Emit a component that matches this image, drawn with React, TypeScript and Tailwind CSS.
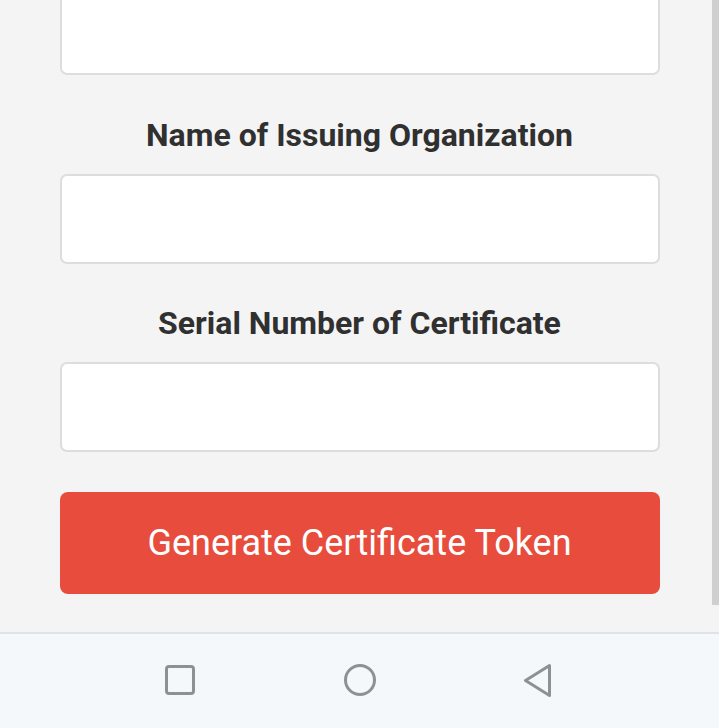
import React from 'react';

function Field({ label, spacing }: { label: string; spacing: string }) {
  return (
    <div className="flex flex-col items-center">
      <label className={`${spacing} text-[32px] leading-[34px] font-bold text-[#303030]`}>{label}</label>
      <input className="w-full h-[90px] bg-white border-2 border-[#dddddd] rounded-[7px] outline-none" />
    </div>
  );
}

export default function App() {
  return (
    <div className="w-[719px] h-[728px] flex flex-col bg-[#f4f4f4] overflow-hidden" style={{ fontFamily: 'Roboto, "Liberation Sans", sans-serif' }}>
      <div className="relative h-[632px] overflow-hidden">
        <div className="w-[600px] mx-auto flex flex-col">
          <input className="w-full h-[90px] mt-[-15px] bg-white border-2 border-[#dddddd] rounded-[7px] outline-none" />
          <Field label="Name of Issuing Organization" spacing="mt-[43px] mb-[22px]" />
          <Field label="Serial Number of Certificate" spacing="mt-[42px] mb-[22px]" />
          <button className="mt-[40px] h-[102px] w-full rounded-[8px] bg-[#e74c3c] text-white text-[36px] leading-none">
            Generate Certificate Token
          </button>
        </div>
        <div className="absolute right-0 top-0 w-[7px] h-[605px] bg-[#cfcfcf]" />
      </div>
      <div className="flex-1 border-t-2 border-[#dde3e8] bg-[#f4f8fb] flex items-center justify-between pl-[165px] pr-[168px] pb-[2px]">
        <svg width="30" height="30" viewBox="0 0 30 30" fill="none" stroke="#8e9194" strokeWidth="3">
          <rect x="1.5" y="1.5" width="27" height="27" rx="2.5" />
        </svg>
        <svg width="32" height="32" viewBox="0 0 32 32" fill="none" stroke="#8e9194" strokeWidth="3">
          <circle cx="16" cy="16" r="14.5" />
        </svg>
        <svg width="27" height="33" viewBox="0 0 27 33" fill="none" stroke="#8e9194" strokeWidth="3" strokeLinejoin="round">
          <path d="M25.5 1.5 L1.5 16.5 L25.5 31.5 Z" />
        </svg>
      </div>
    </div>
  );
}
